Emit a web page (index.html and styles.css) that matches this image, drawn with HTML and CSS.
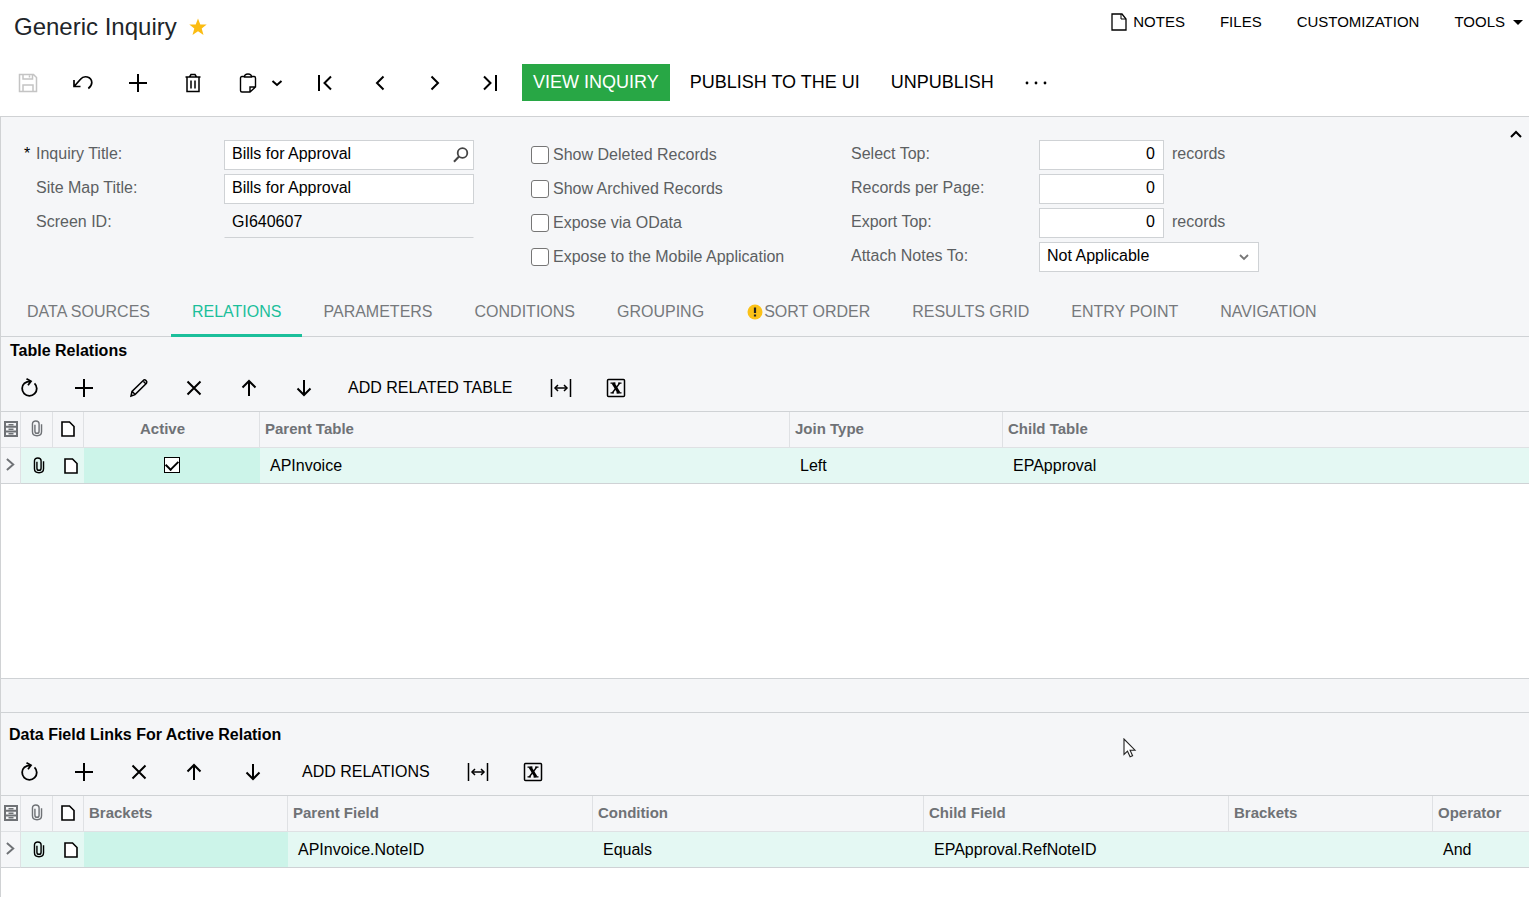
FILE: index.html
```html
<!DOCTYPE html>
<html lang="en">
<head>
    <meta charset="UTF-8">
    <meta name="viewport" content="width=device-width, initial-scale=1.0">
    <title>Generic Inquiry</title>
    <link rel="stylesheet" href="styles.css">
</head>
<body>

    <!-- shared icons -->
    <svg class="sprite" aria-hidden="true">
        <symbol id="i-plus" viewBox="0 0 20 20"><path d="M10 1v18M1 10h18" stroke-width="2"/></symbol>
        <symbol id="i-refresh" viewBox="0 0 20 20"><path d="M15.500 5.300A7.300 7.300 0 1 1 5.500 5.200C7 4 9 3.300 12 3.400M7.500 .8l4.500 2.500-3 4" stroke-width="1.800"/></symbol>
        <symbol id="i-edit" viewBox="0 0 20 20"><path d="M2 18l1-4.500L14.500 2.200c1.600-1.200 4.200 1.300 3 3L6 16.600zM14.500 3.500l2 2M3.200 13.500l3 3" stroke-width="1.500"/></symbol>
        <symbol id="i-x" viewBox="0 0 20 20"><path d="M3.500 3.500l13 13M16.500 3.500l-13 13" stroke-width="2"/></symbol>
        <symbol id="i-up" viewBox="0 0 20 20"><path d="M10 18V3M3.500 9.500L10 3l6.500 6.500" stroke-width="2"/></symbol>
        <symbol id="i-down" viewBox="0 0 20 20"><path d="M10 2v15M3.500 10.500L10 17l6.500-6.500" stroke-width="2"/></symbol>
        <symbol id="i-fit" viewBox="0 0 22 20"><path d="M1.500 1v18M20.500 1v18M5 10h12" stroke-width="1.500"/><path d="M8 7l-3 3 3 3M14 7l3 3-3 3" stroke-width="1.500"/></symbol>
        <symbol id="i-excel" viewBox="0 0 20 20"><rect x="1.500" y="1.500" width="17" height="17" rx="1" stroke-width="1.500"/><path d="M4.500 5.200h5M12 5.200h3.500M4.500 14.800H8M10.500 14.800h5" stroke-width="1.200"/><path d="M7 5l6 10" stroke-width="3"/><path d="M13.800 5L6.200 15" stroke-width="1.300"/></symbol>
        <symbol id="i-cabinet" viewBox="0 0 14 16"><path d="M1 1h12v14H1zM1 5.700h12M1 10.400h12" stroke-width="2"/><path d="M4.500 3.700h5M4.500 8.200h5M4.500 12.700h5" stroke-width="1.500"/></symbol>
        <symbol id="i-clip" viewBox="0 0 12 18"><path d="M3.800 5v6.800c0 3 4.400 3 4.400 0V4c0-4-7-4-7 0v8.500c0 5.500 9.600 5.500 9.600 0V4.500" stroke-width="1.500"/></symbol>
        <symbol id="i-doc" viewBox="0 0 14 16"><path class="sheet" d="M1 1h7.500L13 5.500V15H1z" stroke-width="1.600"/></symbol>
        <symbol id="i-right" viewBox="0 0 10 16"><path d="M1 2l7 6-7 6" stroke-width="2.200"/></symbol>
    </svg>

    <header class="page-header">
        <h1>Generic Inquiry</h1>
        <button class="star" aria-label="Favorite">
            <svg width="18" height="18" viewBox="0 0 18 18"><path d="M9 .5l2.300 6H17.700l-5 4 1.800 6.500L9 13.200 3.500 17l1.800-6.500-5-4h6.400z"/></svg>
        </button>
        <nav class="page-links">
            <a href="#">
                <svg class="icon note" width="16" height="18" viewBox="0 0 16 18"><path d="M1 1h10l4 5v11H1z" stroke-width="1.300"/><path d="M10 1v5h5" stroke-width="1"/></svg>
                NOTES
            </a>
            <a href="#">FILES</a>
            <a href="#">CUSTOMIZATION</a>
            <a href="#">TOOLS <span class="caret"></span></a>
        </nav>
    </header>

    <div class="main-toolbar">
        <button class="tool" aria-label="Save" disabled><svg class="icon" width="20" height="20" viewBox="0 0 20 20"><path d="M1.500 1.500h14l3 3v14h-17zM5 1.500v4.500h9.500V1.500M5 18.500v-6.500h10v6.500M11.500 2.500v2" stroke-width="1.500"/></svg></button>
        <button class="tool" aria-label="Undo"><svg class="icon" width="20" height="20" viewBox="0 0 20 20"><path d="M1 7v6.500h6.500M1.300 13.200L7.500 6.200C11 2 18.500 3.500 18.800 9.500c0 2.700-1.600 4.600-3.500 6" stroke-width="1.700"/></svg></button>
        <button class="tool" aria-label="Add"><svg class="icon" width="20" height="20"><use href="#i-plus"/></svg></button>
        <button class="tool" aria-label="Delete"><svg class="icon" width="20" height="20" viewBox="0 0 20 20"><path d="M2.500 4h15M6.500 4l1.500-2.500h4L13.500 4M4 4v14.500h12V4" stroke-width="1.500"/><path d="M8 7.500v8M12 7.500v8" stroke-width="1.500"/></svg></button>
        <button class="tool paste" aria-label="Clipboard">
            <svg class="icon" width="18" height="20" viewBox="0 0 18 20"><path d="M6 3.500H3c-1 0-1.500.5-1.500 1.500v12.500c0 1 .5 1.500 1.500 1.500h8l5.500-5V5c0-1-.5-1.500-1.500-1.500h-3M5.500 4c0-4 7-4 7 0zM11 18.500v-4.500h5" stroke-width="1.400"/></svg>
            <svg class="icon" width="12" height="8" viewBox="0 0 12 8"><path d="M1.500 2L6 6l4.500-4" stroke-width="2"/></svg>
        </button>
        <button class="tool" aria-label="First"><svg class="icon" width="16" height="16" viewBox="0 0 16 16"><path d="M2 0v16M14 1.500L7.500 8l6.500 6.500" stroke-width="2"/></svg></button>
        <button class="tool" aria-label="Previous"><svg class="icon" width="16" height="16" viewBox="0 0 16 16"><path d="M11.500 1.500L5 8l6.500 6.500" stroke-width="2"/></svg></button>
        <button class="tool" aria-label="Next"><svg class="icon" width="16" height="16" viewBox="0 0 16 16"><path d="M4.500 1.500L11 8l-6.500 6.500" stroke-width="2"/></svg></button>
        <button class="tool" aria-label="Last"><svg class="icon" width="16" height="16" viewBox="0 0 16 16"><path d="M14 0v16M2 1.500L8.500 8 2 14.500" stroke-width="2"/></svg></button>
        <button class="action primary">VIEW INQUIRY</button>
        <button class="action">PUBLISH TO THE UI</button>
        <button class="action">UNPUBLISH</button>
        <button class="more" aria-label="More"><svg width="22" height="4" viewBox="0 0 22 4"><circle cx="2" cy="2" r="1.400"/><circle cx="11" cy="2" r="1.400"/><circle cx="20" cy="2" r="1.400"/></svg></button>
    </div>

    <main class="content">
        <form class="summary">
            <div class="fields titles">
                <label class="required" for="inquiryTitle">Inquiry Title:</label>
                <div class="control">
                    <input type="text" id="inquiryTitle" value="Bills for Approval">
                    <button type="button" class="lookup" aria-label="Search"><svg class="icon" width="16" height="16" viewBox="0 0 16 16"><circle cx="9.500" cy="6" r="4.800" stroke-width="1.800"/><path d="M6 9.500L1 14.800" stroke-width="2"/></svg></button>
                </div>
                <label for="siteMapTitle">Site Map Title:</label>
                <input type="text" id="siteMapTitle" value="Bills for Approval">
                <label for="screenId">Screen ID:</label>
                <input type="text" id="screenId" value="GI640607" readonly>
            </div>

            <div class="checks">
                <label><input type="checkbox"> Show Deleted Records</label>
                <label><input type="checkbox"> Show Archived Records</label>
                <label><input type="checkbox"> Expose via OData</label>
                <label><input type="checkbox"> Expose to the Mobile Application</label>
            </div>

            <div class="fields limits">
                <label for="selectTop">Select Top:</label>
                <div class="control"><input type="text" class="num" id="selectTop" value="0"> <span>records</span></div>
                <label for="perPage">Records per Page:</label>
                <div class="control"><input type="text" class="num" id="perPage" value="0"></div>
                <label for="exportTop">Export Top:</label>
                <div class="control"><input type="text" class="num" id="exportTop" value="0"> <span>records</span></div>
                <label for="attachNotes">Attach Notes To:</label>
                <div class="control">
                    <select id="attachNotes"><option>Not Applicable</option></select>
                    <svg class="icon select-arrow" width="10" height="8" viewBox="0 0 10 8"><path d="M1 2l4 4 4-4" stroke-width="1.800"/></svg>
                </div>
            </div>

            <button type="button" class="collapse" aria-label="Collapse"><svg class="icon" width="12" height="8" viewBox="0 0 12 8"><path d="M1 7l5-5 5 5" stroke-width="2"/></svg></button>
        </form>

        <nav class="tabs">
            <a href="#">DATA SOURCES</a>
            <a href="#" class="selected">RELATIONS</a>
            <a href="#">PARAMETERS</a>
            <a href="#">CONDITIONS</a>
            <a href="#">GROUPING</a>
            <a href="#"><svg class="warning" width="18" height="16" viewBox="0 0 18 16"><circle cx="9" cy="8" r="7.500" fill="#fbc117"/><path d="M9 3.500v5.500M9 10.500v2" stroke="#222" stroke-width="2.200"/></svg>SORT ORDER</a>
            <a href="#">RESULTS GRID</a>
            <a href="#">ENTRY POINT</a>
            <a href="#">NAVIGATION</a>
        </nav>

        <section class="relations">
            <h2>Table Relations</h2>
            <div class="grid-toolbar">
                <button class="tool" aria-label="Refresh"><svg class="icon" width="20" height="20"><use href="#i-refresh"/></svg></button>
                <button class="tool" aria-label="Add"><svg class="icon" width="20" height="20"><use href="#i-plus"/></svg></button>
                <button class="tool" aria-label="Edit"><svg class="icon" width="20" height="20"><use href="#i-edit"/></svg></button>
                <button class="tool" aria-label="Delete"><svg class="icon" width="20" height="20"><use href="#i-x"/></svg></button>
                <button class="tool" aria-label="Move up"><svg class="icon" width="20" height="20"><use href="#i-up"/></svg></button>
                <button class="tool" aria-label="Move down"><svg class="icon" width="20" height="20"><use href="#i-down"/></svg></button>
                <button class="text-tool">ADD RELATED TABLE</button>
                <button class="tool" aria-label="Fit columns"><svg class="icon" width="22" height="20"><use href="#i-fit"/></svg></button>
                <button class="tool" aria-label="Export to Excel"><svg class="icon" width="20" height="20"><use href="#i-excel"/></svg></button>
            </div>
            <div class="grid">
                <table>
                    <colgroup><col class="c-state"><col class="c-files"><col class="c-notes"><col class="c-active"><col class="c-table"><col class="c-join"><col></colgroup>
                    <thead>
                        <tr>
                            <th class="mark"><svg class="icon gray" width="14" height="16"><use href="#i-cabinet"/></svg></th>
                            <th class="mark"><svg class="icon gray" width="12" height="17"><use href="#i-clip"/></svg></th>
                            <th class="mark"><svg class="icon black" width="14" height="16"><use href="#i-doc"/></svg></th>
                            <th class="active-head">Active</th>
                            <th>Parent Table</th>
                            <th>Join Type</th>
                            <th>Child Table</th>
                        </tr>
                    </thead>
                    <tbody>
                        <tr>
                            <td class="mark state"><svg class="icon gray" width="9" height="15"><use href="#i-right"/></svg></td>
                            <td class="mark shifted"><svg class="icon" width="12" height="17"><use href="#i-clip"/></svg></td>
                            <td class="mark shifted"><svg class="icon" width="14" height="16"><use href="#i-doc"/></svg></td>
                            <td class="current mark"><input type="checkbox" class="cell-check" aria-label="Active" checked></td>
                            <td>APInvoice</td>
                            <td>Left</td>
                            <td>EPApproval</td>
                        </tr>
                    </tbody>
                </table>
            </div>
        </section>

        <div class="splitter"></div>

        <section class="links">
            <h2>Data Field Links For Active Relation</h2>
            <div class="grid-toolbar">
                <button class="tool" aria-label="Refresh"><svg class="icon" width="20" height="20"><use href="#i-refresh"/></svg></button>
                <button class="tool" aria-label="Add"><svg class="icon" width="20" height="20"><use href="#i-plus"/></svg></button>
                <button class="tool" aria-label="Delete"><svg class="icon" width="20" height="20"><use href="#i-x"/></svg></button>
                <button class="tool" aria-label="Move up"><svg class="icon" width="20" height="20"><use href="#i-up"/></svg></button>
                <button class="tool wide" aria-label="Move down"><svg class="icon" width="20" height="20"><use href="#i-down"/></svg></button>
                <button class="text-tool">ADD RELATIONS</button>
                <button class="tool" aria-label="Fit columns"><svg class="icon" width="22" height="20"><use href="#i-fit"/></svg></button>
                <button class="tool" aria-label="Export to Excel"><svg class="icon" width="20" height="20"><use href="#i-excel"/></svg></button>
            </div>
            <div class="grid">
                <table>
                    <colgroup><col class="c-state"><col class="c-files"><col class="c-notes"><col class="c-bracket"><col class="c-field"><col class="c-condition"><col class="c-field"><col class="c-bracket"><col></colgroup>
                    <thead>
                        <tr>
                            <th class="mark"><svg class="icon gray" width="14" height="16"><use href="#i-cabinet"/></svg></th>
                            <th class="mark"><svg class="icon gray" width="12" height="17"><use href="#i-clip"/></svg></th>
                            <th class="mark"><svg class="icon black" width="14" height="16"><use href="#i-doc"/></svg></th>
                            <th>Brackets</th>
                            <th>Parent Field</th>
                            <th>Condition</th>
                            <th>Child Field</th>
                            <th>Brackets</th>
                            <th>Operator</th>
                        </tr>
                    </thead>
                    <tbody>
                        <tr>
                            <td class="mark state"><svg class="icon gray" width="9" height="15"><use href="#i-right"/></svg></td>
                            <td class="mark shifted"><svg class="icon" width="12" height="17"><use href="#i-clip"/></svg></td>
                            <td class="mark shifted"><svg class="icon" width="14" height="16"><use href="#i-doc"/></svg></td>
                            <td class="current"></td>
                            <td>APInvoice.NoteID</td>
                            <td>Equals</td>
                            <td>EPApproval.RefNoteID</td>
                            <td></td>
                            <td>And</td>
                        </tr>
                    </tbody>
                </table>
            </div>
        </section>
    </main>

    <svg class="cursor" width="14" height="20" viewBox="0 0 14 20"><path d="M1 1v15.500l3.500-3.300 2.600 5.600 2.500-1.100-2.500-5.500H12z" fill="#fff" stroke="#222" stroke-width="1.100"/></svg>

</body>
</html>
```
FILE: styles.css
```css
* {
    box-sizing: border-box;
}
body {
    margin: 0;
    min-height: 100vh;
    display: flex;
    flex-direction: column;
    font-family: "Liberation Sans", Arial, sans-serif;
    font-size: 16px;
    line-height: 20px;
    color: #000;
    background-color: #fff;
    overflow-x: hidden;
}
a {
    color: inherit;
    text-decoration: none;
}
button,
input,
select {
    font: inherit;
    color: inherit;
}
button {
    padding: 0;
    border: none;
    background: none;
    cursor: pointer;
    white-space: nowrap;
}
svg {
    display: block;
    flex: none;
}
.sprite {
    position: absolute;
    width: 0;
    height: 0;
}
.icon {
    fill: none;
    stroke: currentColor;
}
.gray {
    color: #6f7276;
}
.black {
    color: #000;
}
.sheet {
    fill: #fff;
}

/* header */
.page-header {
    display: flex;
    align-items: center;
    height: 54px;
    padding: 0 6px 0 14px;
}
h1 {
    margin: 0;
    font-size: 24px;
    line-height: 28px;
    font-weight: normal;
    color: #212529;
}
.star {
    margin-left: 12px;
    fill: #fbbc12;
}
.page-links {
    display: flex;
    gap: 35px;
    margin-left: auto;
    padding-bottom: 10px;
    font-size: 15px;
}
.page-links a {
    display: flex;
    align-items: center;
}
.note {
    margin-right: 6px;
}
.caret {
    margin-left: 8px;
    border: 5px solid transparent;
    border-top-color: #000;
    border-bottom: none;
}

/* toolbars */
.main-toolbar {
    display: flex;
    align-items: center;
    height: 62px;
    padding: 10px 0 15px;
}
.tool {
    display: flex;
    align-items: center;
    justify-content: center;
    width: 55px;
    height: 36px;
}
.tool:disabled {
    color: #c4c4c4;
}
.paste {
    justify-content: flex-start;
    gap: 14px;
    width: 77px;
    padding-left: 19px;
}
.action {
    height: 37px;
    margin-left: 9px;
    padding: 0 11px 2px;
    font-size: 18px;
}
.primary {
    margin-left: 5px;
    color: #fff;
    background-color: #28a745;
}
.more {
    margin-left: 20px;
}
.grid-toolbar {
    display: flex;
    align-items: center;
    height: 46px;
}
.wide {
    width: 64px;
}
.text-tool {
    padding: 0 21px 1px 17px;
}

/* form */
.content {
    flex: 1;
    display: flex;
    flex-direction: column;
    border-top: 1px solid #d0d2d4;
    border-left: 1px solid #d0d2d4;
    background-color: #f5f6f8;
}
.summary {
    display: flex;
    position: relative;
    padding: 23px 0 17px 35px;
    color: #5c5f62;
}
.fields {
    display: grid;
    grid-auto-rows: 30px;
    align-content: start;
    row-gap: 4px;
}
.titles {
    grid-template-columns: 188px 250px;
}
.limits {
    grid-template-columns: 188px 220px;
}
.fields label,
.control span {
    line-height: 28px;
    padding-bottom: 2px;
}
.required::before {
    content: "*";
    display: inline-block;
    width: 12px;
    margin-left: -12px;
    color: #000;
}
.control {
    display: flex;
    align-items: center;
    position: relative;
    gap: 8px;
}
input[type="text"],
select {
    width: 100%;
    height: 30px;
    padding: 0 7px 2px;
    border: 1px solid #cfd2d5;
    border-radius: 0;
    color: #000;
    background-color: #fff;
}
input[readonly] {
    border-color: transparent transparent #cfd2d5;
    background: none;
}
.control .num {
    width: 125px;
    text-align: right;
    padding-right: 8px;
}
.lookup {
    position: absolute;
    right: 5px;
    color: #444;
}
select {
    appearance: none;
}
.select-arrow {
    position: absolute;
    right: 10px;
    pointer-events: none;
    color: #777;
}
.checks {
    display: flex;
    flex-direction: column;
    gap: 4px;
    width: 320px;
    margin-left: 57px;
}
.checks label {
    display: flex;
    align-items: center;
    gap: 4px;
    height: 30px;
}
.checks input {
    appearance: none;
    width: 18px;
    height: 18px;
    margin: 0;
    border: 1px solid #767676;
    border-radius: 3px;
    background-color: #fff;
}
.collapse {
    position: absolute;
    top: 13px;
    right: 7px;
    color: #000;
}

/* tabs */
.tabs {
    display: flex;
    height: 48px;
    padding-left: 5px;
    border-bottom: 1px solid #cfd2d5;
    color: #76797c;
}
.tabs a {
    display: flex;
    align-items: center;
    height: 48px;
    padding: 0 21px;
    border-bottom: 3px solid transparent;
    white-space: nowrap;
}
.tabs .selected {
    color: #1bbf9b;
    border-bottom-color: #1bbf9b;
}

/* grids */
h2 {
    margin: 0;
    font-size: 16px;
    line-height: 28px;
    padding: 0 9px;
}
.links {
    flex: 1;
    display: flex;
    flex-direction: column;
}
.links h2 {
    padding: 8px 8px 0;
}
.grid {
    background-color: #fff;
    border-top: 1px solid #cfd2d5;
}
.relations .grid {
    min-height: 267px;
}
.links .grid {
    flex: 1;
}
.splitter {
    height: 35px;
    border-top: 1px solid #cfd2d5;
    border-bottom: 1px solid #cfd2d5;
}
table {
    width: 100%;
    table-layout: fixed;
    border-collapse: separate;
    border-spacing: 0;
}
th {
    height: 36px;
    padding: 0 5px 2px;
    font-size: 15px;
    text-align: left;
    color: #6f7276;
    background-color: #f5f6f8;
    border-right: 1px solid #dfe1e4;
    border-bottom: 1px solid #dfe1e4;
}
th:last-child {
    border-right: none;
}
td {
    height: 36px;
    padding: 0 10px;
    background-color: #e4f8f3;
    border-bottom: 1px solid #cfd2d5;
}
.active-head {
    padding-right: 23px;
    text-align: center;
}
.mark {
    padding: 0 0 2px;
}
.mark svg {
    margin: 0 auto;
}
.shifted {
    padding: 0 0 0 4px;
}
.state {
    background-color: #f5f6f8;
    border-right: 1px solid #dfe1e4;
}
.current {
    background-color: #ccf4e9;
}
.cell-check {
    appearance: none;
    display: flex;
    justify-content: center;
    width: 16px;
    height: 16px;
    margin: 0 auto;
    border: 1px solid #000;
    background-color: #fff;
}
.cell-check:checked::after {
    content: "";
    width: 6px;
    height: 10px;
    border: solid #000;
    border-width: 0 2px 2px 0;
    transform: rotate(45deg);
}
.c-state {
    width: 20px;
}
.c-files {
    width: 32px;
}
.c-notes {
    width: 31px;
}
.c-active {
    width: 176px;
}
.c-table {
    width: 530px;
}
.c-join {
    width: 213px;
}
.c-bracket {
    width: 204px;
}
.c-field {
    width: 305px;
}
.c-condition {
    width: 331px;
}

.cursor {
    position: absolute;
    top: 738px;
    left: 1123px;
}
```
